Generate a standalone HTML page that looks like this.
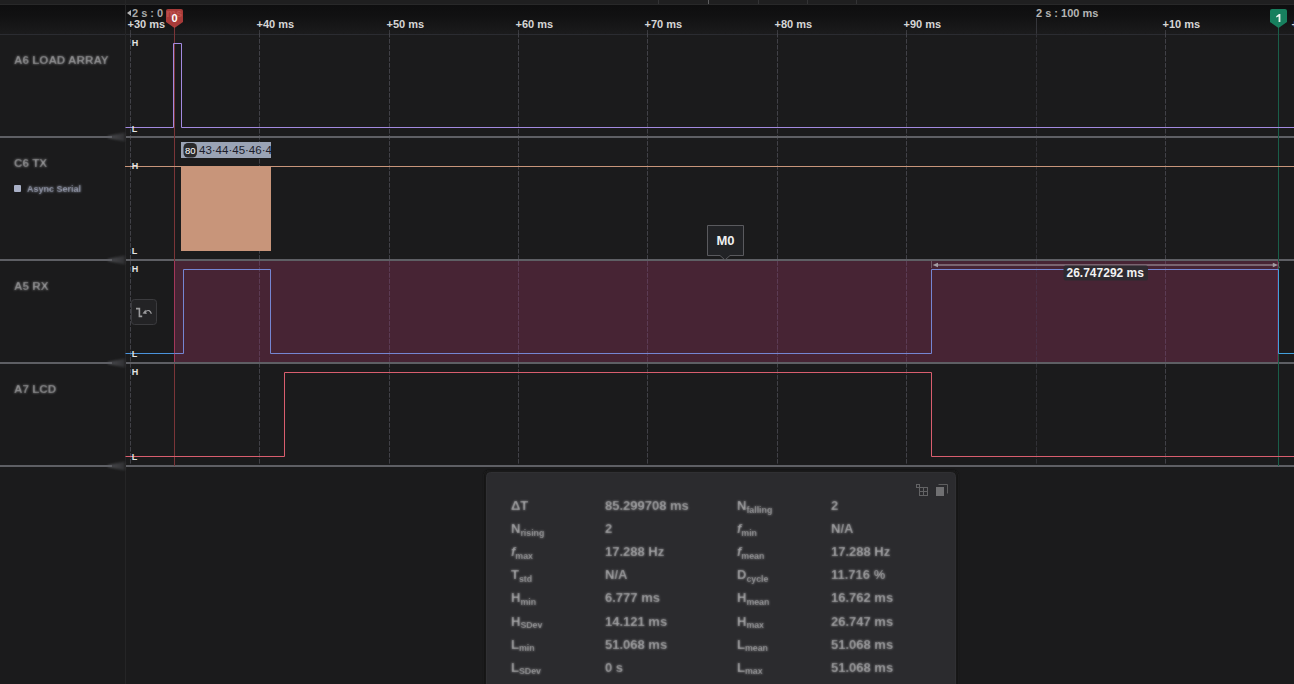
<!DOCTYPE html>
<html><head><meta charset="utf-8"><title>Logic</title>
<style>
html,body{margin:0;padding:0;background:#1b1b1c;width:1294px;height:684px;overflow:hidden;font-family:"Liberation Sans", sans-serif;}
svg{position:absolute;left:0;top:0;}
svg text{font-family:"Liberation Sans", sans-serif;}
</style></head><body>
<svg width="1294" height="684" viewBox="0 0 1294 684" shape-rendering="auto">
<defs>
<linearGradient id="lg" x1="0" y1="0" x2="0" y2="1"><stop offset="0" stop-color="#0e0e0f"/><stop offset="0.35" stop-color="#111112"/><stop offset="1" stop-color="#1b1b1c"/></linearGradient>
<linearGradient id="sh" x1="0" y1="0" x2="1" y2="0"><stop offset="0" stop-color="#5e5f64" stop-opacity="0.75"/><stop offset="1" stop-color="#5e5f64" stop-opacity="0.3"/></linearGradient>
<filter id="bl" x="-5%" y="-30%" width="110%" height="160%"><feGaussianBlur in="SourceGraphic" stdDeviation="0.85" result="b"/><feComposite in="SourceGraphic" in2="b" operator="arithmetic" k1="0" k2="0.3" k3="0.7" k4="0"/></filter>
<filter id="bl2" x="-5%" y="-30%" width="110%" height="160%"><feGaussianBlur stdDeviation="0.4"/></filter>
<clipPath id="lc"><rect x="181" y="142" width="90" height="16"/></clipPath>
<filter id="sb" x="-30%" y="-100%" width="160%" height="300%"><feGaussianBlur stdDeviation="1.3"/></filter>
<clipPath id="ov"><rect x="174.5" y="261" width="1103.5" height="101"/></clipPath>
</defs>

<rect x="0" y="0" width="1294" height="5" fill="#1f1f20"/>
<rect x="0" y="4" width="1294" height="1" fill="#282829"/>
<rect x="0" y="5" width="126" height="29" fill="url(#lg)"/>
<rect x="126" y="5" width="1168" height="29" fill="url(#lg)"/>
<rect x="658" y="0" width="1" height="4" fill="#333335"/>
<rect x="708" y="0" width="1" height="4" fill="#5e5e60"/>
<rect x="758" y="0" width="1" height="4" fill="#333335"/>
<rect x="807" y="0" width="1" height="4" fill="#333335"/>
<rect x="856" y="0" width="1" height="4" fill="#333335"/>
<rect x="0" y="34" width="1294" height="1" fill="#2b2c31"/>
<rect x="125" y="0" width="1" height="684" fill="#252526"/>
<rect x="174.5" y="261" width="1103.5" height="101" fill="#472434"/>
<line x1="1277.5" y1="261" x2="1277.5" y2="362" stroke="#6a2645" stroke-width="1"/>
<line x1="130.5" y1="30" x2="130.5" y2="34" stroke="#3a3a3e" stroke-width="1"/>
<line x1="130.5" y1="33" x2="130.5" y2="466" stroke="#414147" stroke-width="1" stroke-dasharray="4.6 1.4"/>
<line x1="259.5" y1="30" x2="259.5" y2="34" stroke="#3a3a3e" stroke-width="1"/>
<line x1="259.5" y1="33" x2="259.5" y2="466" stroke="#414147" stroke-width="1" stroke-dasharray="4.6 1.4"/>
<line x1="389.5" y1="30" x2="389.5" y2="34" stroke="#3a3a3e" stroke-width="1"/>
<line x1="389.5" y1="33" x2="389.5" y2="466" stroke="#414147" stroke-width="1" stroke-dasharray="4.6 1.4"/>
<line x1="518.5" y1="30" x2="518.5" y2="34" stroke="#3a3a3e" stroke-width="1"/>
<line x1="518.5" y1="33" x2="518.5" y2="466" stroke="#414147" stroke-width="1" stroke-dasharray="4.6 1.4"/>
<line x1="647.5" y1="30" x2="647.5" y2="34" stroke="#3a3a3e" stroke-width="1"/>
<line x1="647.5" y1="33" x2="647.5" y2="466" stroke="#414147" stroke-width="1" stroke-dasharray="4.6 1.4"/>
<line x1="777.5" y1="30" x2="777.5" y2="34" stroke="#3a3a3e" stroke-width="1"/>
<line x1="777.5" y1="33" x2="777.5" y2="466" stroke="#414147" stroke-width="1" stroke-dasharray="4.6 1.4"/>
<line x1="906.5" y1="30" x2="906.5" y2="34" stroke="#3a3a3e" stroke-width="1"/>
<line x1="906.5" y1="33" x2="906.5" y2="466" stroke="#414147" stroke-width="1" stroke-dasharray="4.6 1.4"/>
<line x1="1036.5" y1="18" x2="1036.5" y2="34" stroke="#35363b" stroke-width="1"/>
<line x1="1036.5" y1="33" x2="1036.5" y2="466" stroke="#313136" stroke-width="1" stroke-dasharray="4.6 1.4"/>
<line x1="1165.5" y1="30" x2="1165.5" y2="34" stroke="#3a3a3e" stroke-width="1"/>
<line x1="1165.5" y1="33" x2="1165.5" y2="466" stroke="#414147" stroke-width="1" stroke-dasharray="4.6 1.4"/>
<line x1="1294.5" y1="30" x2="1294.5" y2="34" stroke="#3a3a3e" stroke-width="1"/>
<line x1="1294.5" y1="33" x2="1294.5" y2="466" stroke="#414147" stroke-width="1" stroke-dasharray="4.6 1.4"/>
<line x1="259.5" y1="33" x2="259.5" y2="466" stroke="#5c3b54" stroke-width="1" stroke-dasharray="4.6 1.4" clip-path="url(#ov)"/>
<line x1="389.5" y1="33" x2="389.5" y2="466" stroke="#5c3b54" stroke-width="1" stroke-dasharray="4.6 1.4" clip-path="url(#ov)"/>
<line x1="518.5" y1="33" x2="518.5" y2="466" stroke="#5c3b54" stroke-width="1" stroke-dasharray="4.6 1.4" clip-path="url(#ov)"/>
<line x1="647.5" y1="33" x2="647.5" y2="466" stroke="#5c3b54" stroke-width="1" stroke-dasharray="4.6 1.4" clip-path="url(#ov)"/>
<line x1="777.5" y1="33" x2="777.5" y2="466" stroke="#5c3b54" stroke-width="1" stroke-dasharray="4.6 1.4" clip-path="url(#ov)"/>
<line x1="906.5" y1="33" x2="906.5" y2="466" stroke="#5c3b54" stroke-width="1" stroke-dasharray="4.6 1.4" clip-path="url(#ov)"/>
<line x1="1036.5" y1="33" x2="1036.5" y2="466" stroke="#4a2f45" stroke-width="1" stroke-dasharray="4.6 1.4" clip-path="url(#ov)"/>
<line x1="1165.5" y1="33" x2="1165.5" y2="466" stroke="#5c3b54" stroke-width="1" stroke-dasharray="4.6 1.4" clip-path="url(#ov)"/>
<rect x="0" y="136" width="112" height="2" fill="#5e5f64"/>
<rect x="126" y="136" width="1168" height="2" fill="#5e5f64"/>
<path d="M108,136 L125,132.5 V141.5 L108,138 Z" fill="url(#sh)" filter="url(#sb)"/>
<rect x="0" y="259" width="112" height="2" fill="#5e5f64"/>
<rect x="126" y="259" width="1168" height="2" fill="#5e5f64"/>
<path d="M108,259 L125,255.5 V264.5 L108,261 Z" fill="url(#sh)" filter="url(#sb)"/>
<rect x="0" y="362" width="112" height="2" fill="#5e5f64"/>
<rect x="126" y="362" width="1168" height="2" fill="#5e5f64"/>
<path d="M108,362 L125,358.5 V367.5 L108,364 Z" fill="url(#sh)" filter="url(#sb)"/>
<rect x="0" y="465" width="112" height="2" fill="#5e5f64"/>
<rect x="126" y="465" width="1168" height="2" fill="#5e5f64"/>
<path d="M108,465 L125,461.5 V470.5 L108,467 Z" fill="url(#sh)" filter="url(#sb)"/>
<text x="127.5" y="28" font-size="11" font-weight="bold" fill="#d6d6d6">+30 ms</text>
<text x="256.5" y="28" font-size="11" font-weight="bold" fill="#d6d6d6">+40 ms</text>
<text x="386.5" y="28" font-size="11" font-weight="bold" fill="#d6d6d6">+50 ms</text>
<text x="515.5" y="28" font-size="11" font-weight="bold" fill="#d6d6d6">+60 ms</text>
<text x="644.5" y="28" font-size="11" font-weight="bold" fill="#d6d6d6">+70 ms</text>
<text x="774.5" y="28" font-size="11" font-weight="bold" fill="#d6d6d6">+80 ms</text>
<text x="903.5" y="28" font-size="11" font-weight="bold" fill="#d6d6d6">+90 ms</text>
<text x="1162.5" y="28" font-size="11" font-weight="bold" fill="#d6d6d6">+10 ms</text>
<text x="1291.5" y="28" font-size="11" font-weight="bold" fill="#d6d6d6">+20 ms</text>
<text x="1036.0" y="17" font-size="11" font-weight="bold" fill="#b4b4b4">2 s : 100 ms</text>
<path d="M127,13 L131,10 L131,16 Z" fill="#b4b4b4"/>
<text x="132" y="17" font-size="11" font-weight="bold" fill="#a8a8a8">2 s : 0 ms</text>
<line x1="174.5" y1="26" x2="174.5" y2="261" stroke="#7a3538" stroke-width="1"/>
<line x1="174.5" y1="261" x2="174.5" y2="362" stroke="#a3375a" stroke-width="1"/>
<line x1="174.5" y1="364" x2="174.5" y2="466" stroke="#7a3538" stroke-width="1"/>
<line x1="1278.5" y1="26" x2="1278.5" y2="466" stroke="#1a5e49" stroke-width="1"/>
<path d="M125.5,127.5 H173.5 V43.5 H181.5 V127.5 H1294" fill="none" stroke="#a38ae0" stroke-width="1"/>
<line x1="125" y1="166.5" x2="1294" y2="166.5" stroke="#c8957a" stroke-width="1"/>
<rect x="181" y="166" width="90" height="85" fill="#c8957a"/>
<rect x="181" y="142" width="90" height="16" fill="#9aa3b5"/>
<rect x="183.5" y="143" width="13.5" height="14.5" rx="4.5" fill="#2a2a2c"/>
<text x="190.2" y="153.8" font-size="9.5" fill="#ffffff" text-anchor="middle">80</text>
<text x="199" y="154" font-size="11.5" fill="#1b1d2b" clip-path="url(#lc)">43·44·45·46·46</text>
<path d="M125.5,353.5 H174.5" fill="none" stroke="#4a93dc" stroke-width="1"/>
<path d="M174.5,353.5 H183.5 V269.5 H270.5 V353.5 H931.5 V269.5 H1278.5" fill="none" stroke="#7585d2" stroke-width="1"/>
<path d="M1278.5,269.5 V353.5 H1294" fill="none" stroke="#42a0dc" stroke-width="1"/>
<path d="M125.5,456.5 H284.5 V372.5 H931.5 V456.5 H1294" fill="none" stroke="#d95e6e" stroke-width="1"/>
<path d="M166.0,11 Q166.0,9 168.0,9 H181.0 Q183.0,9 183.0,11 V22 L174.5,28 L166.0,22 Z" fill="#c0413f" fill-opacity="0.86"/>
<text x="174.5" y="22" font-size="11" font-weight="bold" fill="#ffffff" text-anchor="middle">0</text>
<path d="M1270,11 Q1270,9 1272,9 H1285 Q1287,9 1287,11 V22 L1278.5,28 L1270,22 Z" fill="#177f5e"/>
<path d="M1276.2,16.2 L1279,14 H1280.4 V22 H1278.6 V16.4 L1276.2,17.6 Z" fill="#eef5f1"/>
<text x="131.8" y="46" font-size="9" font-weight="bold" fill="#e4e4e4">H</text>
<text x="131.8" y="132" font-size="9" font-weight="bold" fill="#e4e4e4">L</text>
<text x="131.8" y="169" font-size="9" font-weight="bold" fill="#e4e4e4">H</text>
<text x="131.8" y="254" font-size="9" font-weight="bold" fill="#e4e4e4">L</text>
<text x="131.8" y="272" font-size="9" font-weight="bold" fill="#e4e4e4">H</text>
<text x="131.8" y="357" font-size="9" font-weight="bold" fill="#e4e4e4">L</text>
<text x="131.8" y="375" font-size="9" font-weight="bold" fill="#e4e4e4">H</text>
<text x="131.8" y="460" font-size="9" font-weight="bold" fill="#e4e4e4">L</text>
<text x="14" y="64" font-size="11.7" font-weight="bold" fill="#aaaaac" filter="url(#bl)">A6 LOAD ARRAY</text>
<text x="14" y="167" font-size="11.7" font-weight="bold" fill="#aaaaac" filter="url(#bl)">C6 TX</text>
<text x="14" y="290" font-size="11.7" font-weight="bold" fill="#aaaaac" filter="url(#bl)">A5 RX</text>
<text x="14" y="393" font-size="11.7" font-weight="bold" fill="#aaaaac" filter="url(#bl)">A7 LCD</text>
<rect x="14" y="185" width="7" height="7" rx="1" fill="#a9b0c6"/>
<text x="27" y="192" font-size="9" font-weight="bold" fill="#bcc3da" filter="url(#bl)">Async Serial</text>
<rect x="131.5" y="299.5" width="25" height="25" rx="3" fill="#232325" stroke="#3b3b3e"/>
<path d="M136,308.6 H139.4 V316.4 H142.2" fill="none" stroke="#9a9a9c" stroke-width="1.6"/>
<path d="M151.4,313.8 Q149.6,308.6 145.6,311.6" fill="none" stroke="#9a9a9c" stroke-width="1.2"/><path d="M142.6,313.4 L145.4,309.8 L146.8,314 Z" fill="#9a9a9c"/>
<path d="M707.5,225.5 H743.5 V255.5 H730 L725,260 L720,255.5 H707.5 Z" fill="#222326" stroke="#5a5a5e"/>
<text x="725.5" y="245" font-size="13" font-weight="bold" fill="#f0f0f0" text-anchor="middle">M0</text>
<line x1="936" y1="265" x2="1274" y2="265" stroke="#7a6470" stroke-width="1.8"/>
<path d="M932.6,265 L938,262.8 L938,267.2 Z" fill="#a39ca2"/>
<path d="M1278,265 L1272.8,262.8 L1272.8,267.2 Z" fill="#a39ca2"/>
<path d="M931.5,261 V268" stroke="#6e5a64" stroke-width="1" fill="none"/>
<path d="M1279,262 L1278.2,265 L1279.5,268" stroke="#6e6a6c" stroke-width="0.9" fill="none"/>
<rect x="1063.5" y="265.5" width="84.5" height="15" rx="2" fill="#2e2a30"/>
<text x="1066.5" y="277" font-size="12" font-weight="bold" fill="#f2f2f2">26.747292 ms</text>
<rect x="484" y="470.5" width="474" height="230" rx="5" fill="#161617" filter="url(#sb)"/>
<rect x="486.5" y="472.5" width="469" height="230" rx="4" fill="#2b2b2e" stroke="#303033" stroke-width="1"/>
<text x="511" y="510.0" font-size="13" font-weight="bold" fill="#b2b2b4" filter="url(#bl)">ΔT</text>
<text x="605" y="510.0" font-size="13" font-weight="bold" fill="#b2b2b4" filter="url(#bl)">85.299708 ms</text>
<text x="737" y="510.0" font-size="13" font-weight="bold" fill="#b2b2b4" filter="url(#bl)">N<tspan font-size="8.8" dy="2.6">falling</tspan></text>
<text x="831" y="510.0" font-size="13" font-weight="bold" fill="#b2b2b4" filter="url(#bl)">2</text>
<text x="511" y="533.1" font-size="13" font-weight="bold" fill="#b2b2b4" filter="url(#bl)">N<tspan font-size="8.8" dy="2.6">rising</tspan></text>
<text x="605" y="533.1" font-size="13" font-weight="bold" fill="#b2b2b4" filter="url(#bl)">2</text>
<text x="737" y="533.1" font-size="13" font-weight="bold" fill="#b2b2b4" filter="url(#bl)"><tspan font-style="italic">f</tspan><tspan font-size="8.8" dy="2.6">min</tspan></text>
<text x="831" y="533.1" font-size="13" font-weight="bold" fill="#b2b2b4" filter="url(#bl)">N/A</text>
<text x="511" y="556.2" font-size="13" font-weight="bold" fill="#b2b2b4" filter="url(#bl)"><tspan font-style="italic">f</tspan><tspan font-size="8.8" dy="2.6">max</tspan></text>
<text x="605" y="556.2" font-size="13" font-weight="bold" fill="#b2b2b4" filter="url(#bl)">17.288 Hz</text>
<text x="737" y="556.2" font-size="13" font-weight="bold" fill="#b2b2b4" filter="url(#bl)"><tspan font-style="italic">f</tspan><tspan font-size="8.8" dy="2.6">mean</tspan></text>
<text x="831" y="556.2" font-size="13" font-weight="bold" fill="#b2b2b4" filter="url(#bl)">17.288 Hz</text>
<text x="511" y="579.3" font-size="13" font-weight="bold" fill="#b2b2b4" filter="url(#bl)">T<tspan font-size="8.8" dy="2.6">std</tspan></text>
<text x="605" y="579.3" font-size="13" font-weight="bold" fill="#b2b2b4" filter="url(#bl)">N/A</text>
<text x="737" y="579.3" font-size="13" font-weight="bold" fill="#b2b2b4" filter="url(#bl)">D<tspan font-size="8.8" dy="2.6">cycle</tspan></text>
<text x="831" y="579.3" font-size="13" font-weight="bold" fill="#b2b2b4" filter="url(#bl)">11.716 %</text>
<text x="511" y="602.4" font-size="13" font-weight="bold" fill="#b2b2b4" filter="url(#bl)">H<tspan font-size="8.8" dy="2.6">min</tspan></text>
<text x="605" y="602.4" font-size="13" font-weight="bold" fill="#b2b2b4" filter="url(#bl)">6.777 ms</text>
<text x="737" y="602.4" font-size="13" font-weight="bold" fill="#b2b2b4" filter="url(#bl)">H<tspan font-size="8.8" dy="2.6">mean</tspan></text>
<text x="831" y="602.4" font-size="13" font-weight="bold" fill="#b2b2b4" filter="url(#bl)">16.762 ms</text>
<text x="511" y="625.5" font-size="13" font-weight="bold" fill="#b2b2b4" filter="url(#bl)">H<tspan font-size="8.8" dy="2.6">SDev</tspan></text>
<text x="605" y="625.5" font-size="13" font-weight="bold" fill="#b2b2b4" filter="url(#bl)">14.121 ms</text>
<text x="737" y="625.5" font-size="13" font-weight="bold" fill="#b2b2b4" filter="url(#bl)">H<tspan font-size="8.8" dy="2.6">max</tspan></text>
<text x="831" y="625.5" font-size="13" font-weight="bold" fill="#b2b2b4" filter="url(#bl)">26.747 ms</text>
<text x="511" y="648.6" font-size="13" font-weight="bold" fill="#b2b2b4" filter="url(#bl)">L<tspan font-size="8.8" dy="2.6">min</tspan></text>
<text x="605" y="648.6" font-size="13" font-weight="bold" fill="#b2b2b4" filter="url(#bl)">51.068 ms</text>
<text x="737" y="648.6" font-size="13" font-weight="bold" fill="#b2b2b4" filter="url(#bl)">L<tspan font-size="8.8" dy="2.6">mean</tspan></text>
<text x="831" y="648.6" font-size="13" font-weight="bold" fill="#b2b2b4" filter="url(#bl)">51.068 ms</text>
<text x="511" y="671.7" font-size="13" font-weight="bold" fill="#b2b2b4" filter="url(#bl)">L<tspan font-size="8.8" dy="2.6">SDev</tspan></text>
<text x="605" y="671.7" font-size="13" font-weight="bold" fill="#b2b2b4" filter="url(#bl)">0 s</text>
<text x="737" y="671.7" font-size="13" font-weight="bold" fill="#b2b2b4" filter="url(#bl)">L<tspan font-size="8.8" dy="2.6">max</tspan></text>
<text x="831" y="671.7" font-size="13" font-weight="bold" fill="#b2b2b4" filter="url(#bl)">51.068 ms</text>
<g fill="none" stroke="#636365" stroke-width="1" filter="url(#bl2)"><rect x="919.5" y="487.5" width="8" height="8"/><line x1="923.5" y1="487.5" x2="923.5" y2="495.5"/><line x1="919.5" y1="491.5" x2="927.5" y2="491.5"/><rect x="916.5" y="484.5" width="3" height="3"/></g>
<g filter="url(#bl2)"><rect x="936" y="487" width="8" height="9" fill="#707072"/><path d="M938.5,484.5 H947.5 V493.5" fill="none" stroke="#5e5e60"/></g>
</svg></body></html>
